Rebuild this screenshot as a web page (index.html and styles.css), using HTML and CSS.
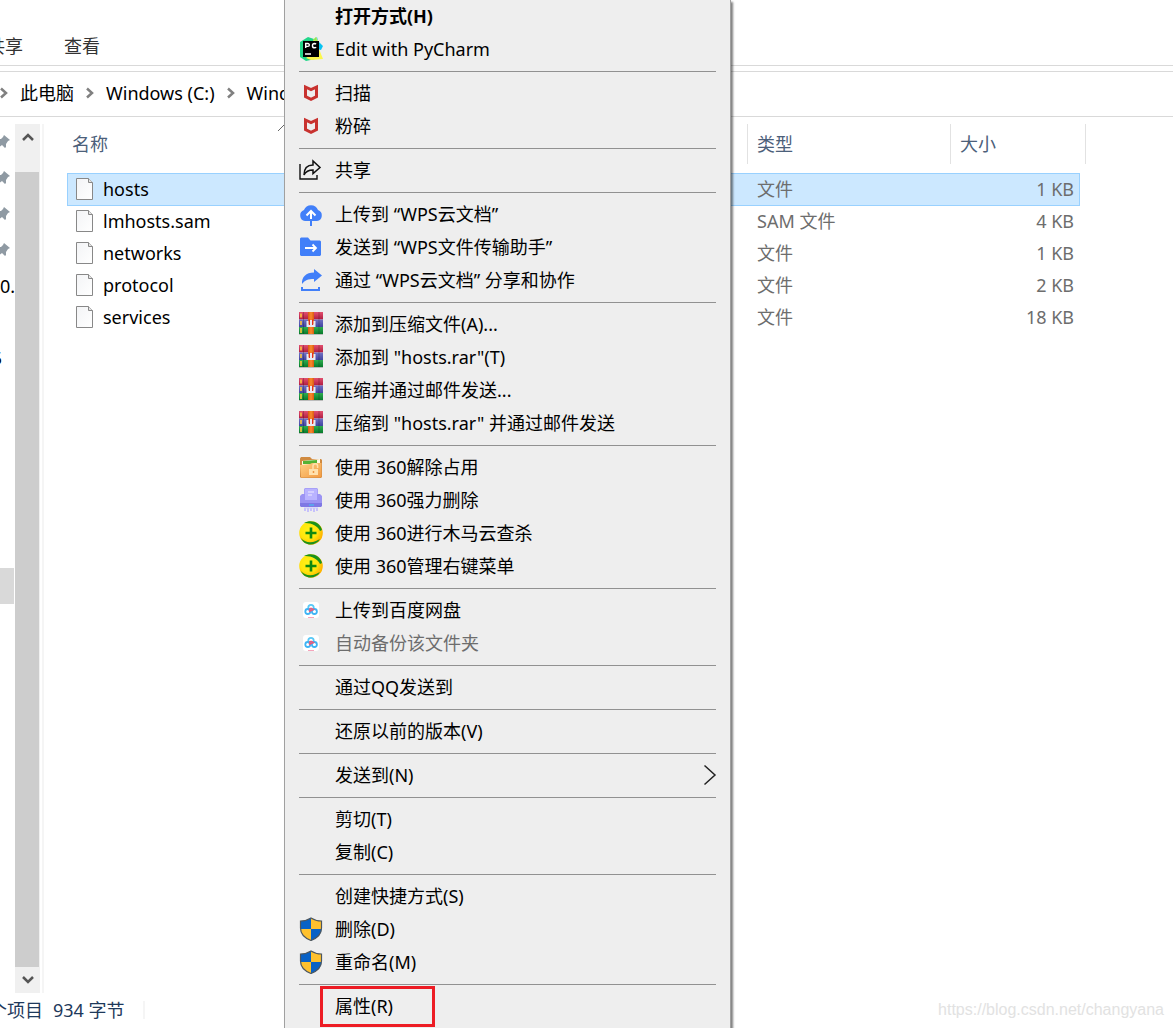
FILE: index.html
```
<!DOCTYPE html>
<html lang="zh-CN">
<head>
<meta charset="utf-8">
<meta name="viewport" content="width=device-width, initial-scale=1">
<title>hosts</title>
<link rel="stylesheet" href="styles.css">
</head>
<body>
<svg class="defs" aria-hidden="true">
  <defs>
    <linearGradient id="paper" x1="0" y1="0" x2="1" y2="1"><stop offset="0" stop-color="#f3f4f6"/><stop offset="1" stop-color="#fff"/></linearGradient>
    <linearGradient id="red" x1="0" y1="0" x2="0" y2="1"><stop offset="0" stop-color="#e2506f"/><stop offset="1" stop-color="#b01c40"/></linearGradient>
    <linearGradient id="blue" x1="0" y1="0" x2="0" y2="1"><stop offset="0" stop-color="#7272c4"/><stop offset="1" stop-color="#4044a0"/></linearGradient>
    <linearGradient id="green" x1="0" y1="0" x2="0" y2="1"><stop offset="0" stop-color="#2fae50"/><stop offset="1" stop-color="#087a2c"/></linearGradient>
    <linearGradient id="strap" x1="0" y1="0" x2="1" y2="0"><stop offset="0" stop-color="#d95a10"/><stop offset=".5" stop-color="#f98a2c"/><stop offset="1" stop-color="#d95a10"/></linearGradient>
    <linearGradient id="folder" x1="0" y1="0" x2="1" y2="1"><stop offset="0" stop-color="#ffd084"/><stop offset="1" stop-color="#f29a42"/></linearGradient>
    <radialGradient id="ball" cx=".4" cy=".4" r=".6"><stop offset="0" stop-color="#fff21a"/><stop offset=".6" stop-color="#ffe60c"/><stop offset="1" stop-color="#ffb400"/></radialGradient>
  </defs>
  <symbol id="i-file" viewBox="0 0 18 22"><path d="M.5.5h12l4 4v17H.5z" fill="url(#paper)" stroke="#888"/><path d="M12.500.5v4h4" fill="#e4e4e4" stroke="#888"/></symbol>
  <symbol id="i-pin" viewBox="0 0 14 14"><path d="M8 0l6 5-2 1-2 3v3l-1 1-3-3-5 4 3-6-3-3 1-1h3l2-2z" fill="#8f9aa3"/></symbol>
  <symbol id="i-chev" viewBox="0 0 8 12"><path d="M1 1.500l5 4.500-5 4.500" fill="none" stroke="#808080" stroke-width="2.500"/></symbol>
  <symbol id="i-pycharm" viewBox="0 0 24 24"><path d="M1 5l8-5 6 2 1 20-9 2-6-4z" fill="#21d789"/><path d="M15 3l3-3 1 4 5 5-2 4-6-1z" fill="#07c3f2"/><path d="M14 3l3-3 2 4-2 3zM7 21l13-9 4 10-12 1z" fill="#fcf84a"/><path d="M14 3l3-3 1 4z" fill="#8ae65c"/><path d="M4 4h16v16H4z" fill="#000"/><path d="M6 17h6" stroke="#fff" stroke-width="1.500"/><path d="M6.700 11V6.500h2.200a1.400 1.400 0 010 2.900H6.700M17 7.200a2 2 0 00-1.400-.7 2 2 0 000 4.300 2 2 0 001.500-.7" fill="none" stroke="#fff" stroke-width="1.400"/></symbol>
  <symbol id="i-mcafee" viewBox="0 0 24 24"><path d="M6.500 6l5.500 2.600L17.500 6v9.600L12 18.300l-5.500-2.700z" fill="none" stroke="#c8322f" stroke-width="3"/></symbol>
  <symbol id="i-share" viewBox="0 0 24 24"><path d="M1 6v15h17v-4" fill="none" stroke="#111" stroke-width="1.400"/><path d="M5 17c0-7 4-10 9-10V3l7 6.500-7 6V12c-4 0-7 1-9 5z" fill="none" stroke="#111" stroke-width="1.500"/></symbol>
  <symbol id="i-cloud" viewBox="0 0 24 24"><path d="M6 19a5.700 5.700 0 01-1-11 7.500 7.500 0 0114 0 5.700 5.700 0 01-1 11z" fill="#417ff9"/><path d="M12 9v8M7.500 13.500L12 9l4.500 4.500" fill="none" stroke="#fff" stroke-width="2"/><path d="M12 19v5" stroke="#417ff9" stroke-width="2"/></symbol>
  <symbol id="i-send" viewBox="0 0 24 24"><path d="M1 3.500L2 2.500h7l2.500 3H21l1 1V20l-1 1H2l-1-1z" fill="#417ff9"/><path d="M6 13h11M13.500 9.500L17 13l-3.500 3.500" fill="none" stroke="#fff" stroke-width="1.800"/></symbol>
  <symbol id="i-forward" viewBox="0 0 24 24"><path d="M3 16c-.5-7 4-11.500 12-11.500V1l8 6.500-8 6.500v-3c-6 0-9 1-12 5z" fill="#417ff9"/><path d="M3 19v3h17v-3" fill="none" stroke="#417ff9" stroke-width="2"/></symbol>
  <symbol id="i-rar" viewBox="0 0 24 24"><path d="M0 0h24v7.500H0z" fill="url(#red)"/><path d="M0 7.500h24V15H0z" fill="url(#blue)"/><path d="M0 15h24v7H0z" fill="url(#green)"/><path d="M0 22h24v1H0z" fill="#bbb"/><path d="M2 1.500v4M2 9v4M2 16v5" stroke="#ffc83d" stroke-width="1.600"/><path d="M4.500 0v22M20 0v22" stroke="#000" stroke-opacity=".22"/><path d="M9 0h6v22H9z" fill="url(#strap)"/><path d="M7.500 15V9h2v3.500h1.500V8h2v4.500h1.500V9h2v6z" fill="#e9e9f2"/><path d="M10 7.500h1V13h-1zM13 7.500h1V13h-1z" fill="#e22e20"/></symbol>
  <symbol id="i-unlock" viewBox="0 0 24 24"><path d="M1 3.500L2 2h9l2 2h9l1 1v17l-1 1H2l-1-1z" fill="#d08a40"/><path d="M3 6l18-2v9H3z" fill="#fffbe6"/><path d="M4 6l14-1v4H4z" fill="#54b335"/><path d="M1 10l10-1 2-1h9.500v13.500l-1 1H2z" fill="url(#folder)"/><path d="M10 14h9v6h-9z" fill="#ffe1ad"/><path d="M14 14v-3a2.300 2.300 0 014.600 0v2" fill="none" stroke="#ffe1ad" stroke-width="1.500"/><path d="M14.500 16v2" stroke="#ef9440" stroke-width="1.500"/></symbol>
  <symbol id="i-shred" viewBox="0 0 24 24"><path d="M5 1l1-1h12l1 1v10H5z" fill="#a7a0f7"/><path d="M1 8l2-2h18l2 2v10H1z" fill="#9c94f3"/><path d="M6 1h12v11H6z" fill="#b9b3ff"/><path d="M9 4h6M9 7h4" stroke="#eeeaff"/><path d="M1 15h22v3l-1 1H2l-1-1z" fill="#7f78e4"/><path d="M10 17h5" stroke="#39cbf4"/><path d="M6 20v3M9 20v4M12 20v3M15 20v4M18 20v3" stroke="#b9b3ff" stroke-width="1.500"/><path d="M5 20h14" stroke="#c9c5ff"/></symbol>
  <symbol id="i-360" viewBox="0 0 24 24"><circle cx="12" cy="12" r="11.800" fill="url(#ball)"/><path d="M5 2C12-2 21 1 23 9l-2 1C19 5 12 1.500 5 2z" fill="#1b921b"/><path d="M2 17c3 4 9 5.500 15 3l4-2c-4 7.500-16 7.500-19-1z" fill="#1b921b"/><path d="M12 6.500v11M6.500 12h11" stroke="#118811" stroke-width="2.600"/></symbol>
  <symbol id="i-baidu" viewBox="0 0 24 24"><rect x="4" y="4" width="16" height="16" rx="3" fill="#fff"/><g fill="none" stroke-width="1.800"><circle cx="12" cy="9.500" r="2.700" stroke="#58c8f6"/><circle cx="8.800" cy="13.500" r="2.500" stroke="#3eb4f5"/><circle cx="15.400" cy="13.500" r="2.500" stroke="#3eb4f5"/><path d="M10 11.500l2-1 2 1-4 2" stroke="#ee5979"/></g><path d="M9 19.500h6" stroke="#f5a4bb"/></symbol>
  <symbol id="i-shield" viewBox="0 0 24 24"><path d="M12 1c3 2 7 3 10.500 3v7c0 6-4 10-10.500 12.500C5.500 21 1.500 17 1.500 11V4C5 4 9 3 12 1z" fill="#ffc12e"/><path d="M12 1v11H1.500V4C5 4 9 3 12 1zM12 12h10.500c-.3 5.500-4 9.200-10.500 11.500z" fill="#0962c6"/><path d="M12 1c3 2 7 3 10.500 3v7c0 6-4 10-10.500 12.500C5.500 21 1.500 17 1.500 11V4C5 4 9 3 12 1z" fill="none" stroke="#4d5760" stroke-width="1.200"/></symbol>
</svg>

<div class="window">
  <nav class="ribbon" aria-label="功能区">
    <a href="#share">共享</a>
    <a href="#view">查看</a>
  </nav>
  <nav class="address" aria-label="地址">
    <svg class="chev"><use href="#i-chev"/></svg>
    <a href="#pc">此电脑</a>
    <svg class="chev"><use href="#i-chev"/></svg>
    <a href="#c">Windows (C:)</a>
    <svg class="chev"><use href="#i-chev"/></svg>
    <a href="#windows">Windows</a>
  </nav>

  <div class="content">
    <aside class="tree">
      <div class="node"><svg class="pin"><use href="#i-pin"/></svg></div>
      <div class="node"><svg class="pin"><use href="#i-pin"/></svg></div>
      <div class="node"><svg class="pin"><use href="#i-pin"/></svg></div>
      <div class="node"><svg class="pin"><use href="#i-pin"/></svg></div>
      <div class="node">0.</div>
      <div class="node"></div>
      <div class="node cut"><span>5</span></div>
      <div class="node current"></div>
    </aside>
    <div class="scrollbar">
      <button type="button" aria-label="向上滚动"><svg viewBox="0 0 12 10"><path d="M1 8l5-5 5 5" fill="none" stroke="#555" stroke-width="2.500"/></svg></button>
      <div class="track"><div class="thumb"></div></div>
      <button type="button" aria-label="向下滚动"><svg viewBox="0 0 12 10"><path d="M1 2l5 5 5-5" fill="none" stroke="#555" stroke-width="2.500"/></svg></button>
    </div>
    <main class="files">
      <table>
        <colgroup><col class="c-name"><col class="c-type"><col class="c-size"><col class="c-end"></colgroup>
        <thead>
          <tr><th><div class="head first">名称<svg class="sort" viewBox="0 0 14 8"><path d="M1 7l6-6 6 6" fill="none" stroke="#666"/></svg></div></th><th><div class="head">类型</div></th><th><div class="head">大小</div></th><th><div class="head end"></div></th></tr>
        </thead>
        <tbody>
          <tr class="selected"><td><div class="name"><svg><use href="#i-file"/></svg>hosts</div></td><td>文件</td><td>1 KB</td></tr>
          <tr><td><div class="name"><svg><use href="#i-file"/></svg>lmhosts.sam</div></td><td>SAM 文件</td><td>4 KB</td></tr>
          <tr><td><div class="name"><svg><use href="#i-file"/></svg>networks</div></td><td>文件</td><td>1 KB</td></tr>
          <tr><td><div class="name"><svg><use href="#i-file"/></svg>protocol</div></td><td>文件</td><td>2 KB</td></tr>
          <tr><td><div class="name"><svg><use href="#i-file"/></svg>services</div></td><td>文件</td><td>18 KB</td></tr>
        </tbody>
      </table>
    </main>
  </div>

  <footer class="status"><span>个项目</span><span class="bytes">934 字节</span></footer>

  <div class="menu" role="menu">
    <button type="button" role="menuitem" class="default">打开方式(H)</button>
    <button type="button" role="menuitem"><svg><use href="#i-pycharm"/></svg>Edit with PyCharm</button>
    <hr>
    <button type="button" role="menuitem"><svg><use href="#i-mcafee"/></svg>扫描</button>
    <button type="button" role="menuitem"><svg><use href="#i-mcafee"/></svg>粉碎</button>
    <hr>
    <button type="button" role="menuitem"><svg><use href="#i-share"/></svg>共享</button>
    <hr>
    <button type="button" role="menuitem"><svg><use href="#i-cloud"/></svg>上传到 “WPS云文档”</button>
    <button type="button" role="menuitem"><svg><use href="#i-send"/></svg>发送到 “WPS文件传输助手”</button>
    <button type="button" role="menuitem"><svg><use href="#i-forward"/></svg>通过 “WPS云文档” 分享和协作</button>
    <hr>
    <button type="button" role="menuitem"><svg><use href="#i-rar"/></svg>添加到压缩文件(A)...</button>
    <button type="button" role="menuitem"><svg><use href="#i-rar"/></svg>添加到 "hosts.rar"(T)</button>
    <button type="button" role="menuitem"><svg><use href="#i-rar"/></svg>压缩并通过邮件发送...</button>
    <button type="button" role="menuitem"><svg><use href="#i-rar"/></svg>压缩到 "hosts.rar" 并通过邮件发送</button>
    <hr>
    <button type="button" role="menuitem"><svg><use href="#i-unlock"/></svg>使用 360解除占用</button>
    <button type="button" role="menuitem"><svg><use href="#i-shred"/></svg>使用 360强力删除</button>
    <button type="button" role="menuitem"><svg><use href="#i-360"/></svg>使用 360进行木马云查杀</button>
    <button type="button" role="menuitem"><svg><use href="#i-360"/></svg>使用 360管理右键菜单</button>
    <hr>
    <button type="button" role="menuitem"><svg><use href="#i-baidu"/></svg>上传到百度网盘</button>
    <button type="button" role="menuitem" disabled><svg><use href="#i-baidu"/></svg>自动备份该文件夹</button>
    <hr>
    <button type="button" role="menuitem">通过QQ发送到</button>
    <hr>
    <button type="button" role="menuitem">还原以前的版本(V)</button>
    <hr>
    <button type="button" role="menuitem">发送到(N)<svg class="more" viewBox="0 0 14 22"><path d="M1.500 1.500L12 11 1.500 20.500" fill="none" stroke="#222" stroke-width="1.500"/></svg></button>
    <hr>
    <button type="button" role="menuitem">剪切(T)</button>
    <button type="button" role="menuitem">复制(C)</button>
    <hr>
    <button type="button" role="menuitem">创建快捷方式(S)</button>
    <button type="button" role="menuitem"><svg><use href="#i-shield"/></svg>删除(D)</button>
    <button type="button" role="menuitem"><svg><use href="#i-shield"/></svg>重命名(M)</button>
    <hr>
    <button type="button" role="menuitem" class="marked">属性(R)</button>
  </div>
  <div class="watermark">https://blog.csdn.net/changyana</div>
</div>
</body>
</html>
```
FILE: styles.css
```
*,
*::before {
  box-sizing: border-box;
}

body {
  margin: 0;
  background: #fff;
  color: #000;
  font: 18px/24px "Noto Sans", "Noto Sans CJK SC", sans-serif;
}

button {
  border: 0;
  padding: 0;
  background: none;
  color: inherit;
  font: inherit;
}

a {
  color: inherit;
  text-decoration: none;
}

.defs {
  position: absolute;
  width: 0;
  height: 0;
}

.window {
  position: relative;
  display: flex;
  flex-direction: column;
  height: 100vh;
  overflow: hidden;
  white-space: nowrap;
}

.ribbon {
  display: flex;
  align-items: flex-end;
  gap: 41px;
  height: 66px;
  margin-left: -13px;
  padding-bottom: 7px;
  border-bottom: 1px solid #d9d9d9;
  color: #333;
}

.address {
  display: flex;
  align-items: center;
  gap: 12px;
  height: 46px;
  margin-top: 5px;
  padding-bottom: 2px;
  border: solid #d9d9d9;
  border-width: 1px 0;
}

.chev {
  width: 8px;
  height: 12px;
}

.content {
  display: flex;
  flex: 1;
  min-height: 0;
  padding-top: 7px;
}

.tree {
  width: 15px;
  overflow: hidden;
}

.node {
  display: flex;
  align-items: center;
  height: 36px;
}

.pin {
  flex: none;
  width: 14px;
  height: 14px;
  margin-left: -4px;
}

.cut {
  width: 2px;
  justify-content: flex-end;
}

.current {
  width: 14px;
  margin-top: 192px;
  background: #d9d9d9;
}

.scrollbar {
  display: flex;
  flex-direction: column;
  width: 25px;
  background: #f0f0f0;
}

.scrollbar button {
  display: flex;
  align-items: center;
  justify-content: center;
  height: 26px;
}

.scrollbar svg {
  width: 12px;
  height: 10px;
}

.track {
  flex: 1;
  padding: 22px 1px 0 0;
}

.thumb {
  height: 100%;
  background: #cdcdcd;
}

.files {
  flex: 1;
  margin-left: 2px;
  padding-left: 23px;
  border-left: 2px solid #f5f5f5;
}

table {
  table-layout: fixed;
  width: 1019px;
  border-spacing: 0;
}

.c-name {
  width: 680px;
}

.c-type {
  width: 203px;
}

.c-size {
  width: 130px;
}

.c-end {
  width: 6px;
}

th {
  padding: 0 0 9px;
  color: #4c607a;
  font-weight: inherit;
  text-align: left;
}

.head {
  position: relative;
  height: 40px;
  padding-left: 9px;
  border-left: 1px solid #e2e2e2;
  line-height: 40px;
}

.head.first {
  padding-left: 5px;
  border-left: 0;
}

.head.end {
  padding: 0;
  border-left: 0;
  border-right: 1px solid #e2e2e2;
}

.sort {
  position: absolute;
  top: 0;
  left: 210px;
  width: 14px;
  height: 8px;
}

td {
  height: 32px;
  padding: 0 0 0 10px;
  color: #6d6d6d;
}

td:first-child {
  padding-left: 9px;
  color: #000;
}

td:nth-child(3) {
  padding-right: 6px;
  text-align: right;
}

.selected td {
  background: #cce8ff;
  box-shadow: inset 0 1px #99d1ff, 0 1px #99d1ff;
}

.selected td:first-child {
  box-shadow: inset 1px 0 #99d1ff, inset 0 1px #99d1ff, 0 1px #99d1ff;
}

.selected td:nth-child(3) {
  box-shadow: inset -1px 0 #99d1ff, inset 0 1px #99d1ff, 0 1px #99d1ff;
}

.name {
  display: flex;
  align-items: center;
  gap: 9px;
}

.name svg {
  width: 18px;
  height: 22px;
}

.status {
  display: flex;
  align-items: center;
  gap: 10px;
  height: 35px;
  margin-left: -11px;
  padding-bottom: 2px;
  color: #1e395b;
}

.bytes {
  padding-right: 18px;
  border-right: 2px solid #f5f5f5;
  line-height: 18px;
}

.menu {
  position: absolute;
  top: 0;
  left: 284px;
  width: 447px;
  min-height: 100%;
  border: solid #a0a0a0;
  border-width: 0 1px;
  background: #eee;
  box-shadow: 2px 2px 2px rgba(0, 0, 0, .5);
}

.menu button {
  position: relative;
  display: flex;
  align-items: center;
  width: 100%;
  height: 33px;
  padding: 0 0 2px 50px;
}

.menu svg {
  position: absolute;
  left: 14px;
  width: 24px;
  height: 24px;
}

.menu .more {
  right: 13px;
  left: auto;
  width: 14px;
  height: 22px;
}

.menu hr {
  height: 1px;
  margin: 5px 14px;
  border: 0;
  background: #919191;
}

.menu .default {
  font-weight: 700;
}

.menu button:disabled {
  color: #6d6d6d;
}

.marked::before {
  position: absolute;
  inset: -4px auto -4px 35px;
  width: 115px;
  border: 3px solid #ed1c24;
  content: "";
}

.watermark {
  position: absolute;
  right: 9px;
  bottom: 6px;
  color: #e2e2e2;
  font: 16px/24px "Liberation Sans", Arial, sans-serif;
}
```
